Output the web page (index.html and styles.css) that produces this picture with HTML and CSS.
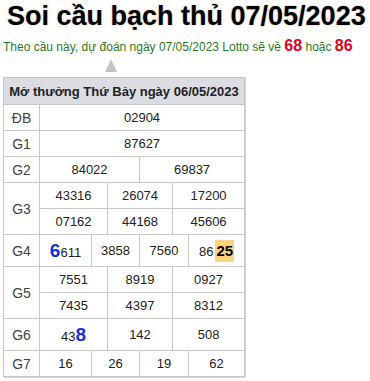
FILE: index.html
```html
<html>
  <head>
    <title>Soi cầu bạch thủ 07/05/2023</title>
    <meta name="viewport" content="width=device-width, initial-scale=1" />
    <link rel="stylesheet" href="styles.css">
  </head>
  <body>
    <main>
      <h1>Soi cầu bạch thủ 07/05/2023</h1>
      <div class="predict">
        Theo cầu này, dự đoán ngày 07/05/2023 Lotto sẽ về <b>68</b> hoặc <b>86</b>
      </div>
      <div class="pointer"><span></span></div>
      <table class="result">
        <colgroup>
          <col class="c-label">
          <col class="c1"><col class="c2"><col class="c3">
          <col class="c4"><col class="c5"><col class="c6">
        </colgroup>
        <thead>
          <tr><th colspan="7">Mở thưởng Thứ Bảy ngày 06/05/2023</th></tr>
        </thead>
        <tbody>
          <tr><td class="label">ĐB</td><td colspan="6">02904</td></tr>
          <tr><td class="label">G1</td><td colspan="6">87627</td></tr>
          <tr><td class="label">G2</td><td colspan="3">84022</td><td colspan="3">69837</td></tr>
          <tr><td class="label" rowspan="2">G3</td><td colspan="2">43316</td><td colspan="2">26074</td><td colspan="2">17200</td></tr>
          <tr><td colspan="2">07162</td><td colspan="2">44168</td><td colspan="2">45606</td></tr>
          <tr class="tall">
            <td class="label">G4</td>
            <td><span class="hit">6</span>611</td>
            <td colspan="2">3858</td>
            <td colspan="2">7560</td>
            <td>86<span class="mark">25</span></td>
          </tr>
          <tr><td class="label" rowspan="2">G5</td><td colspan="2">7551</td><td colspan="2">8919</td><td colspan="2">0927</td></tr>
          <tr><td colspan="2">7435</td><td colspan="2">4397</td><td colspan="2">8312</td></tr>
          <tr class="tall">
            <td class="label">G6</td>
            <td colspan="2">43<span class="hit">8</span></td>
            <td colspan="2">142</td>
            <td colspan="2">508</td>
          </tr>
          <tr><td class="label">G7</td><td>16</td><td colspan="2">26</td><td colspan="2">19</td><td>62</td></tr>
        </tbody>
      </table>
    </main>
  </body>
</html>
```

FILE: styles.css
```css
body {
  margin: 0;
  font-family: 'Liberation Sans', Arial, sans-serif;
  background: #fff;
}

main {
  padding: 0 3px;
}

h1 {
  margin: 0;
  padding: 0 0 0 4px;
  font-size: 27px;
  line-height: 32px;
  font-weight: bold;
  color: #000;
  text-shadow: 0 0 2px #b9a88a;
}

.predict {
  margin-top: 6px;
  font-size: 12px;
  line-height: 16px;
  color: #2b7a25;
}

.predict b {
  color: #e2001a;
  font-size: 16px;
}

.pointer {
  height: 22px;
  position: relative;
}

.pointer span {
  position: absolute;
  left: 102px;
  top: 4px;
  width: 0;
  height: 0;
  border-left: 6px solid transparent;
  border-right: 6px solid transparent;
  border-bottom: 13px solid #c3c3c3;
}

.result {
  border-collapse: collapse;
  table-layout: fixed;
  width: 241px;
  font-size: 13px;
  color: #222;
  box-shadow: 1px 1px 0 #d6d6d6;
}

.result .c-label { width: 36px; }
.result .c1 { width: 52px; }
.result .c2 { width: 16px; }
.result .c3 { width: 32px; }
.result .c4 { width: 33px; }
.result .c5 { width: 16px; }
.result .c6 { width: 56px; }

.result th {
  background: #dcdce3;
  color: #222;
  font-size: 13px;
  font-weight: bold;
  height: 27px;
  padding: 0;
  border: 1px solid #c4c4c8;
  text-align: center;
}

.result td {
  border: 1px solid #c8c8c8;
  text-align: center;
  height: 26px;
  padding: 0;
  white-space: nowrap;
}

.result td.label {
  color: #444;
  font-size: 14px;
}

.result tr.tall td {
  height: 32px;
}

.result .hit {
  color: #1431d6;
  font-weight: bold;
  font-size: 19px;
}

.result .mark {
  display: inline-block;
  margin-left: 2px;
  background: #fdd27e;
  font-weight: bold;
  font-size: 15px;
  line-height: 22px;
  color: #000;
  padding: 0 1px;
}
```
